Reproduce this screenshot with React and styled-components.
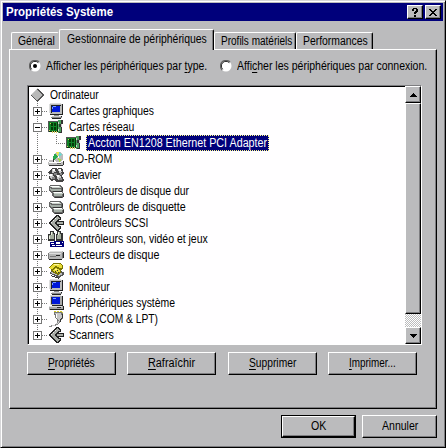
import React, { useLayoutEffect, useRef } from "react";
import styled, { createGlobalStyle, css } from "styled-components";

const FACE = "#bbbbbd";
const SHADOW = "#7d7d80";
const NAVY = "#00007b";

const Global = createGlobalStyle`
  * { box-sizing: border-box; }
  body { margin: 0; background: ${FACE}; overflow: hidden; }
  svg { display: block; flex: none; }
`;

const Window = styled.main`
  width: 446px;
  height: 448px;
  padding: 2px 1px 1px 2px;
  display: flex;
  flex-direction: column;
  background: ${FACE};
  border: 1px solid;
  border-color: #d6d6d8 #000 #000 #d6d6d8;
  box-shadow: inset 1px 1px 0 #fff, inset -1px -1px 0 ${SHADOW};
  font: 12px/16px "Liberation Sans", Arial, sans-serif;
  color: #000;
`;

const TitleBar = styled.header`
  height: 18px;
  flex: none;
  display: flex;
  align-items: center;
  gap: 2px;
  padding: 0 2px 0 3px;
  margin-right: 1px;
  background: ${NAVY};
  color: #fff;
  font-weight: bold;
`;

const Spacer = styled.div`
  flex: 1;
`;

const raised = css`
  background: ${FACE};
  border: 1px solid;
  border-color: #fff #000 #000 #fff;
  box-shadow: inset -1px -1px 0 ${SHADOW};
`;

const CaptionButton = styled.button`
  ${raised}
  width: 16px;
  height: 14px;
  padding: 0;
  display: flex;
  align-items: center;
  justify-content: center;
`;

const Tabs = styled.nav`
  height: 28px;
  flex: none;
  display: flex;
  align-items: flex-end;
  padding-left: 8px;
`;

const Tab = styled.div`
  width: ${(p) => p.$width}px;
  height: ${(p) => (p.$active ? 21 : 17)}px;
  margin-bottom: ${(p) => (p.$active ? -1 : 0)}px;
  padding: ${(p) => (p.$active ? "1px 0 0 7px" : "0 0 0 6px")};
  position: relative;
  z-index: ${(p) => (p.$active ? 1 : 0)};
  background: ${FACE};
  border: 1px solid;
  border-color: #fff ${(p) => (p.$flush ? FACE : "#000")} ${FACE} #fff;
  border-bottom: 0;
  border-radius: 2px 2px 0 0;
  box-shadow: ${(p) => (p.$flush ? "none" : `inset -1px 0 0 ${SHADOW}`)};
`;

const Panel = styled.section`
  width: 428px;
  height: 360px;
  flex: none;
  margin-left: 6px;
  padding: 8px 15px 0 17px;
  ${raised}
`;

const RadioRow = styled.div`
  display: flex;
  height: 16px;
  align-items: center;
`;

const Radio = styled.label`
  display: flex;
  align-items: center;
  gap: 5px;
  width: ${(p) => p.$width}px;
  padding-left: 2px;
  flex: none;
`;

const ListBox = styled.div`
  width: 395px;
  height: 260px;
  margin-top: 11px;
  display: flex;
  background: #fffeff;
  border: 1px solid;
  border-color: ${SHADOW} #fff #fff ${SHADOW};
`;

const Tree = styled.div`
  flex: 1;
  border: solid #000;
  border-width: 1px 0 0 1px;
`;

const TreeRow = styled.div`
  height: 16px;
  display: flex;
  align-items: center;
`;

const Name = styled.span`
  height: 16px;
  padding-left: ${(p) => p.$pad}px;
`;

const Selection = styled.span`
  width: 183px;
  height: 16px;
  margin-left: 4px;
  padding-left: 1px;
  background: ${NAVY};
  color: #fff;
  border: 1px dotted #ffff84;
  line-height: 14px;
`;

const ScrollBar = styled.div`
  width: 16px;
  display: flex;
  flex-direction: column;
  background: repeating-conic-gradient(#fff 0 25%, ${FACE} 0 50%) 0 0 / 2px 2px;
`;

const ScrollButton = styled.div`
  ${raised}
  height: 17px;
  display: flex;
  align-items: center;
  justify-content: center;
`;

const Thumb = styled.div`
  ${raised}
  height: 211px;
`;

const Actions = styled.div`
  display: flex;
  gap: 11.33px;
  margin-top: 7px;
`;

const Button = styled.button`
  ${raised}
  width: ${(p) => p.$width}px;
  height: ${(p) => p.$height || 23}px;
  padding: 0 0 1px;
  display: flex;
  align-items: center;
  justify-content: center;
  font: inherit;
  color: inherit;
`;

const DefaultFrame = styled.div`
  border: 1px solid #000;
`;

const Footer = styled.footer`
  display: flex;
  justify-content: flex-end;
  gap: 6px;
  padding: 6px 7px 0 0;
`;

const TextBox = styled.span`
  display: inline-block;
  width: ${(p) => p.$width}px;
  white-space: nowrap;
  text-align: left;
  vertical-align: top;
  u {
    text-underline-offset: 2px;
    text-decoration-thickness: 1px;
  }
`;

const TextRun = styled.span`
  display: inline-block;
  transform-origin: 0 50%;
`;

/* Condenses a caption to the width it has in the narrow dialog font. */
function Text({ width, children }) {
  const ref = useRef(null);
  useLayoutEffect(() => {
    const el = ref.current;
    el.style.transform = `scaleX(${width / el.offsetWidth})`;
  }, [width, children]);
  return (
    <TextBox $width={width}>
      <TextRun ref={ref}>{children}</TextRun>
    </TextBox>
  );
}

function Glyph({ width = 16, height = 16, children }) {
  return (
    <svg width={width} height={height} viewBox={`0 0 ${width} ${height}`} shapeRendering="crispEdges">
      {children}
    </svg>
  );
}

const MonitorIcon = () => (
  <Glyph>
    <path fill="#bbb" d="M2 1h12v10H2z" />
    <path fill="#ddd" d="M2 0h11v1H2zM1 1h1v9H1z" />
    <path fill="#222" d="M14 1h1v11H2v-1h12zM4 2h9v1H4zM3 2h1v8H3z" />
    <path fill="#0018d8" d="M4 3h8v6H4z" />
    <path fill="#78a0ff" d="M5 3h3v1H5zM4 4h1v2H4z" />
    <path fill="#888" d="M6 12h5v1H6zM3 14h11v1H3z" />
    <path fill="#ccc" d="M4 13h9v1H4z" />
    <path fill="#222" d="M13 13h1v1h-1zM4 15h9v1H4z" />
  </Glyph>
);

const ComputerIcon = () => (
  <Glyph>
    <path fill="#aaa" d="M3 1h11v9H3zM1 11h14v4H1z" />
    <path fill="#ddd" d="M2 0h11v1H2zM2 1h1v9H2zM1 11h13v1H1z" />
    <path fill="#222" d="M14 1h1v10h-1zM4 10h10v1H4zM15 11h1v4h-1zM2 14h13v1H2z" />
    <path fill="#0018d8" d="M4 2h8v7H4z" />
    <path fill="#78a0ff" d="M5 3h3v1H5z" />
    <path fill="#333" d="M3 2h1v7H3zM9 12h4v1H9z" />
  </Glyph>
);

const CardIcon = () => (
  <Glyph>
    <path fill="#108428" d="M1 3h11v9H1z" />
    <path fill="#555" d="M0 2h1v11H0zM1 2h11v1H1z" />
    <path fill="#063a08" d="M3 4h2v3H3zM6 4h2v3H6zM3 8h2v3H3zM6 8h2v3H6zM1 12h10v1H1zM9 3h1v9H9z" />
    <path fill="#d4c860" d="M1 11h1v1H1zM4 12h1v2H4zM6 12h1v2H6zM8 12h1v2H8zM2 4h1v1H2z" />
    <path fill="#4aa05c" d="M10 1h3v13h-3z" />
    <path fill="#333" d="M13 1h2v4h-1v9h-3v-1h2zM11 5h2v3h-2z" />
    <path fill="#ccc" d="M10 3h1v2h-1zM13 5h1v3h-1zM10 10h1v2h-1z" />
  </Glyph>
);

const CdIcon = () => (
  <Glyph>
    <path fill="#bcbcbc" d="M1 9h5v2h9v3H0v-3h1z" />
    <path fill="#333" d="M1 14h14v1H1zM15 10h1v4h-1zM5 8h1v3H5z" />
    <circle cx="10.5" cy="6" r="5" fill="#bbb" />
    <path fill="#28a850" d="M7 2l3 4-4 3-1-3z" />
    <path fill="#f0e850" d="M8 1l3 0-1 5z" />
    <path fill="#70d8d0" d="M11 1l3 2-3 3z" />
    <path fill="#a8d848" d="M10 7l4 2-3 2z" />
    <circle cx="10.5" cy="6" r="1" fill="#fff" />
    <path fill="#fff" d="M1 11h12v1H1z" />
    <path fill="#666" d="M9 12h4v1H9z" />
  </Glyph>
);

const KeysIcon = () => (
  <Glyph>
    <path fill="#444" d="M4 1h5l1 2V1h4l2 5-2 3 2 4-2 2H8l-2-2-3 1-2-3 1-3-2-2 2-3z" />
    <path fill="#ccc" d="M4 2h3l1 3-4 1zM10 2h3l1 3-3 1zM1 7h4l1 3-3 2zM8 8h4l2 4-4 1z" />
    <path fill="#fff" d="M5 2h2v2H5zM11 2h2v2h-2zM2 7h2v2H2zM9 8h2v2H9z" />
    <path fill="#888" d="M6 6h3v2H6zM12 6h2v2h-2zM4 10h3v2H4zM11 11h3v2h-3z" />
  </Glyph>
);

const DrivesIcon = () => (
  <Glyph>
    <path fill="#666" d="M2 2h10l3 2v5l-1 1h2v4l-2 1H6l-2-2v-3L1 8V4z" />
    <path fill="#c7d0c8" d="M2 3h9l2 2H5L2 4zM5 9h9v1l1 1H7L5 10z" />
    <path fill="#fff" d="M3 3h8v1H3zM6 9h8v1H6z" />
    <path fill="#a4aea6" d="M2 5l2 1h9v2H4L2 7zM6 11h8v2H6z" />
    <path fill="#333" d="M5 8h9v1H5zM7 14h7v1H7zM14 5h1v3h-1zM15 11h1v3h-1z" />
  </Glyph>
);

const ScsiIcon = () => (
  <Glyph>
    <path fill="#222" d="M8 0h2l3 3v2h-2L8 8l3 3h2v2l-3 3H8L0 8z" />
    <path fill="#a9ada6" d="M9 1l3 3h-2L6 8l4 4h2l-3 3-7-7z" />
    <path fill="#222" d="M8 6h8v4H8z" />
    <path fill="#a9ada6" d="M9 7h6v2H9z" />
    <path fill="#eee" d="M3 7h1v1H3zM5 5h1v1H5zM7 3h1v1H7z" />
  </Glyph>
);

const SoundIcon = () => (
  <Glyph>
    <path fill="#333" d="M2 0h4v2h1v8H0V3h2zM9 0h4v2h2v8H8V3h1z" />
    <path fill="#a5ad9c" d="M3 1h2v2h1v5H1V4h2zM10 1h2v2h1v5H9V4h1z" />
    <path fill="#e8eddd" d="M3 1h1v3H3zM1 5h1v3H1zM10 1h1v3h-1z" />
    <path fill="#00007b" d="M2 11h4v-1h10v6H2z" />
    <path fill="#fff" d="M3 12h3v1H3zM8 11h4v2H8zM4 14h3v1H4zM8 14h6v1H8zM14 11h1v1h-1z" />
  </Glyph>
);

const DriveIcon = () => (
  <Glyph>
    <path fill="#b5b5b5" d="M2 4h13v7l-1 1H0V6z" />
    <path fill="#ddd" d="M2 4h12v1H2zM0 6h13v1H0z" />
    <path fill="#777" d="M14 6h1v5h-1zM2 9h6v1H2zM0 6h1v6H0z" />
    <path fill="#222" d="M1 12h13v1H1zM15 5h1v6h-1zM8 8h4v1H8z" />
  </Glyph>
);

const ModemIcon = () => (
  <Glyph>
    <path fill="#555" d="M1 10l10 5 5-3v-3L6 7z" />
    <path fill="#bbb" d="M2 10l9 3 4-2-8-4z" />
    <path fill="#7b7400" d="M3 2l3-2h6l3 3v3l-2 1v3l-3 2-6-3-1-3-2-1z" />
    <path fill="#e8dc38" d="M3 3l3-2h6l2 2v2h-2L8 3 4 6H2zM5 7l3-2 4 2v2l-2 1-5-2z" />
    <path fill="#fff898" d="M6 1h5v1H6zM7 6h2v1H7z" />
    <path fill="#333" d="M7 8h1v1H7zM9 7h1v1H9zM10 9h1v1h-1zM3 12l8 3v1L3 13z" />
  </Glyph>
);

const PortIcon = () => (
  <Glyph>
    <path fill="#d8cc28" d="M6 0h2v1H6zM9 0h2v1H9zM12 0h2v1h-2zM14 1h1v1h-1z" />
    <path fill="#777" d="M6 1h8v1h1v5l-3 3v1H9v-2L7 7V4H6z" />
    <path fill="#c6c6c6" d="M7 2h6v2h1v3l-3 3-2-3-1-3z" />
    <path fill="#fff" d="M8 3h1v4H8z" />
    <path fill="#333" d="M14 3h1v4h-1zM13 7h1v1h-1zM12 8h1v3h-1z" />
    <path fill="#888" d="M9 10h3v2h-1v1h-1v1H8v1H4v1H1v-1h2v-1h4v-1h1v-1h1z" />
    <path fill="#ccc" d="M10 10h1v2h-1zM8 12h2v1H8zM4 14h3v1H4z" />
  </Glyph>
);

const RootIcon = () => (
  <Glyph>
    <path fill="#555" d="M8 1l7 7-7 7-7-7z" />
    <path fill="#b8b8b8" d="M8 2l5 6-5 5-6-5z" />
    <path fill="#d5d5d5" d="M8 1l1 1-7 6H1z" />
  </Glyph>
);

/* Dotted connector lines and the expand box of one row, 19px wide. */
const Branch = ({ open, leaf, last }) => (
  <svg width="19" height="16" viewBox="0 0 19 16" shapeRendering="crispEdges">
    <path
      stroke="#777"
      strokeDasharray="1 1"
      fill="none"
      d={leaf ? "M8.500 0V16" : `M8.500 0V${last ? 8 : 16}M13 8.500H19`}
    />
    {!leaf && (
      <>
        <rect x="4.500" y="4.500" width="8" height="8" fill="#fffeff" stroke="#777" />
        <path fill="#000" d={open ? "M6 8h5v1H6z" : "M6 8h5v1H6zM8 6h1v5H8z"} />
      </>
    )}
  </svg>
);

const Elbow = () => (
  <svg width="18" height="16" viewBox="0 0 18 16" shapeRendering="crispEdges">
    <path stroke="#777" strokeDasharray="1 1" fill="none" d="M8.500 0V8.500H18" />
  </svg>
);

const RadioMark = ({ checked }) => (
  <svg width="12" height="12" viewBox="0 0 12 12">
    <circle cx="6" cy="6" r="5.500" fill="#fff" />
    <path d="M2 10A5.500 5.500 0 0 1 10 2" fill="none" stroke="#666" strokeWidth="1.200" />
    <path d="M2.700 9.300A4.500 4.500 0 0 1 9.300 2.700" fill="none" stroke="#222" />
    {checked && <circle cx="6" cy="6" r="2" fill="#000" />}
  </svg>
);

const devices = [
  { name: "Cartes graphiques", width: 85, Icon: MonitorIcon },
  { name: "Cartes réseau", width: 65, Icon: CardIcon, open: true },
  { name: "Accton EN1208 Ethernet PCI Adapter", width: 179, Icon: CardIcon, leaf: true },
  { name: "CD-ROM", width: 43, Icon: CdIcon },
  { name: "Clavier", width: 32, Icon: KeysIcon },
  { name: "Contrôleurs de disque dur", width: 120, Icon: DrivesIcon },
  { name: "Contrôleurs de disquette", width: 117, Icon: DrivesIcon },
  { name: "Contrôleurs SCSI", width: 79, Icon: ScsiIcon },
  { name: "Contrôleurs son, vidéo et jeux", width: 139, Icon: SoundIcon },
  { name: "Lecteurs de disque", width: 90, Icon: DriveIcon },
  { name: "Modem", width: 35, Icon: ModemIcon },
  { name: "Moniteur", width: 41, Icon: MonitorIcon },
  { name: "Périphériques système", width: 106, Icon: ComputerIcon },
  { name: "Ports (COM & LPT)", width: 89, Icon: PortIcon },
  { name: "Scanners", width: 45, Icon: ScsiIcon },
];

const tabs = [
  { name: "Général", tab: 48, width: 37, flush: true },
  { name: "Gestionnaire de périphériques", tab: 155, width: 140, active: true },
  { name: "Profils matériels", tab: 82, width: 71 },
  { name: "Performances", tab: 77, width: 65 },
];

export default function App() {
  return (
    <>
      <Global />
      <Window>
        <TitleBar>
          <Text width={107}>Propriétés Système</Text>
          <Spacer />
          <CaptionButton aria-label="Aide">
            <Glyph width={8} height={9}>
              <path d="M2 0h4v1h1v3H6v1H5v1H3V4h1V3h1V1H3v2H1V1h1zM3 7h2v2H3z" />
            </Glyph>
          </CaptionButton>
          <CaptionButton aria-label="Fermer">
            <Glyph width={8} height={7}>
              <path d="M0 0h2v1h1v1h2V1h1V0h2v1H7v1H6v1H5v1h1v1h1v1h1v1H6V6H5V5H3v1H2v1H0V6h1V5h1V4h1V3H2V2H1V1H0z" />
            </Glyph>
          </CaptionButton>
        </TitleBar>
        <Tabs>
          {tabs.map((t) => (
            <Tab key={t.name} $width={t.tab} $active={t.active} $flush={t.flush}>
              <Text width={t.width}>{t.name}</Text>
            </Tab>
          ))}
        </Tabs>
        <Panel>
          <RadioRow>
            <Radio $width={191}>
              <RadioMark checked />
              <Text width={161}>Afficher les périphériques par <u>t</u>ype.</Text>
            </Radio>
            <Radio $width={210}>
              <RadioMark />
              <Text width={190}>Affi<u>c</u>her les périphériques par connexion.</Text>
            </Radio>
          </RadioRow>
          <ListBox>
            <Tree>
              <TreeRow>
                <RootIcon />
                <Name $pad={5}><Text width={49}>Ordinateur</Text></Name>
              </TreeRow>
              {devices.map(({ name, width, Icon, open, leaf }, i) => (
                <TreeRow key={name}>
                  <Branch open={open} leaf={leaf} last={i === devices.length - 1} />
                  {leaf && <Elbow />}
                  <Icon />
                  {leaf ? (
                    <Selection><Text width={width}>{name}</Text></Selection>
                  ) : (
                    <Name $pad={5}><Text width={width}>{name}</Text></Name>
                  )}
                </TreeRow>
              ))}
            </Tree>
            <ScrollBar>
              <ScrollButton><Glyph width={7} height={4}><path d="M3 0h1v1h1v1h1v1h1v1H0V3h1V2h1V1h1z" /></Glyph></ScrollButton>
              <Thumb />
              <Spacer />
              <ScrollButton><Glyph width={7} height={4}><path d="M0 0h7v1H6v1H5v1H4v1H3V3H2V2H1V1H0z" /></Glyph></ScrollButton>
            </ScrollBar>
          </ListBox>
          <Actions>
            <Button $width={89}><Text width={47}><u>P</u>ropriétés</Text></Button>
            <Button $width={89}><Text width={47}><u>R</u>afraîchir</Text></Button>
            <Button $width={89}><Text width={47}><u>S</u>upprimer</Text></Button>
            <Button $width={89}><Text width={47}><u>I</u>mprimer...</Text></Button>
          </Actions>
        </Panel>
        <Footer>
          <DefaultFrame>
            <Button $width={73} $height={21}><Text width={15}>OK</Text></Button>
          </DefaultFrame>
          <Button $width={75}><Text width={36}>Annuler</Text></Button>
        </Footer>
      </Window>
    </>
  );
}
